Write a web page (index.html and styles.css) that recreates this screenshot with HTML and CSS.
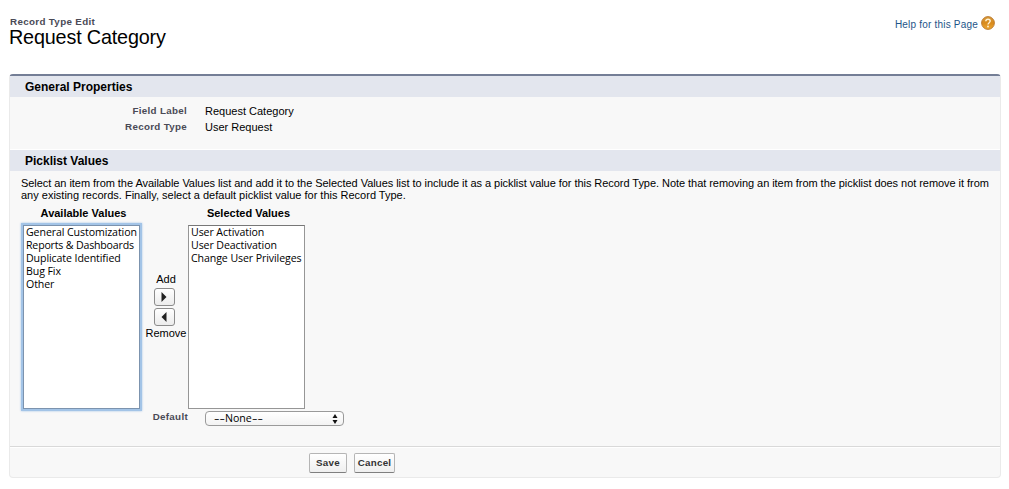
FILE: index.html
```html
<!DOCTYPE html>
<html lang="en">
<head>
<meta charset="utf-8">
<title>Record Type Edit: Request Category</title>
<link rel="stylesheet" href="styles.css">
</head>
<body>
<header class="page-head">
  <div class="titles">
    <div class="page-type">Record Type Edit</div>
    <h1>Request Category</h1>
  </div>
  <a class="help"><span>Help for this Page</span>
    <svg width="14" height="14" viewBox="0 0 14 14">
      <defs><linearGradient id="orb" x1="0" y1="0" x2="0" y2="1"><stop offset="0" stop-color="#d69a3c"/><stop offset=".5" stop-color="#d98a1c"/><stop offset="1" stop-color="#eda832"/></linearGradient></defs>
      <circle cx="7" cy="7" r="6.4" fill="url(#orb)" stroke="#b9762a" stroke-width=".9"/>
      <path d="M4.8 5.3C4.9 4 5.800 3.300 7 3.300C8.300 3.300 9.200 4 9.200 5.100C9.200 6.700 7 6.700 7 8.600" fill="none" stroke="#fff3d8" stroke-width="1.400"/>
      <circle cx="7" cy="10.500" r=".9" fill="#fff3d8"/>
    </svg>
  </a>
</header>
<main class="panel">
  <h2 class="section">General Properties</h2>
  <dl class="details">
    <dt class="label">Field Label</dt><dd>Request Category</dd>
    <dt class="label">Record Type</dt><dd>User Request</dd>
  </dl>
  <h2 class="section second">Picklist Values</h2>
  <div class="intro"><div class="lead">Select an item from the Available Values list and add it to the Selected Values list to include it as a picklist value for this Record Type. Note that removing an item from the picklist does not remove it from</div><div>any existing records. Finally, select a default picklist value for this Record Type.</div></div>
  <div class="picker">
    <div class="column">
      <h3>Available Values</h3>
      <ul class="list focused"><li>General Customization</li><li class="tight">Reports &amp; Dashboards</li><li>Duplicate Identified</li><li>Bug Fix</li><li>Other</li></ul>
    </div>
    <div class="transfer">
      <span class="word">Add</span>
      <button class="arrow" aria-label="Add"><svg width="6" height="10" viewBox="0 0 6 10"><path d="M.5 0L5.500 5 .5 10z" fill="#222"/></svg></button>
      <button class="arrow" aria-label="Remove"><svg width="6" height="10" viewBox="0 0 6 10"><path d="M5.500 0L.5 5l5 5z" fill="#222"/></svg></button>
      <span class="word remove">Remove</span>
    </div>
    <div class="column">
      <h3>Selected Values</h3>
      <ul class="list"><li>User Activation</li><li>User Deactivation</li><li>Change User Privileges</li></ul>
    </div>
  </div>
  <div class="default-row">
    <span class="label">Default</span>
    <div class="select"><span><span class="dash">--</span>None<span class="dash">--</span></span><svg width="6" height="10" viewBox="0 0 6 10"><path d="M3 0l2.500 4h-5zM3 10L.5 6h5z" fill="#111"/></svg></div>
  </div>
  <footer class="actions"><button class="btn save">Save</button><button class="btn cancel">Cancel</button></footer>
</main>
</body>
</html>
```
FILE: styles.css
```css
* { box-sizing: border-box; }
body { margin: 0; background: #fff; color: #000; font: 11px/13px "Liberation Sans", Arial, sans-serif; white-space: nowrap; }
h1, h2, h3, ul, dl, dd { margin: 0; padding: 0; }
button { margin: 0; padding: 0; font-family: inherit; }
svg { display: block; flex: none; }

.page-head { display: flex; justify-content: space-between; height: 74px; padding: 15px 14px 0 10px; }
.page-type { font-size: 9.8px; line-height: 13px; font-weight: bold; color: #4a4a56; letter-spacing: .33px; }
h1 { font-size: 19.8px; line-height: 19px; font-weight: normal; margin-left: -1px; letter-spacing: -.17px; }
.help { display: flex; gap: 3px; color: #1d5488; font-size: 10px; line-height: 20px; letter-spacing: .2px; }
.help svg { margin-top: 1px; }

.panel { width: 992px; height: 404px; margin-left: 9px; background: #f8f8f8; border: 1px solid #eaeaea; border-top: 2px solid #747e96; border-radius: 4px; }
.section { height: 21px; padding-left: 15px; background: #e3e6ee; font-size: 12px; line-height: 22px; }
.section.second { height: 22px; border-top: 1px solid #fff; }
.details { display: grid; grid-template-columns: 177px auto; column-gap: 18px; grid-auto-rows: 16px; height: 52px; padding-top: 6px; line-height: 16px; }
.label { font-size: 9.8px; font-weight: bold; color: #4a4a56; text-align: right; letter-spacing: .3px; }
.intro { padding: 6px 0 0 11px; line-height: 12px; height: 36px; }
.lead { letter-spacing: -.049px; }

.picker { display: flex; padding-left: 13px; }
.column { width: 117px; }
h3 { height: 18px; font-size: 11px; line-height: 13px; text-align: center; padding-left: 4px; }
.list { height: 184px; list-style: none; background: #fff; border: 1px solid #969696; border-top-color: #777; padding: 0 0 0 2px; font: 10.6px/13px "Lucida Grande", "Open Sans", sans-serif; letter-spacing: -.09px; }
.list .tight { letter-spacing: -.18px; }
.focused { border-color: #7c93ae; box-shadow: 0 0 0 2px #a3c4e7, 0 0 2px 2px #a3c4e7; }
.transfer { width: 48px; padding-top: 66px; display: flex; flex-direction: column; align-items: center; }
.word { line-height: 13px; margin-left: 4px; }
.arrow { display: flex; align-items: center; justify-content: center; width: 21px; height: 18px; margin-top: 2px; border: 1px solid #8c8c8c; border-radius: 3px; background: linear-gradient(#fff, #ececec); }
.remove { margin-top: 1px; }

.default-row { display: flex; gap: 17px; height: 37px; }
.default-row .label { width: 178px; line-height: 16px; }
.select { display: flex; align-items: center; justify-content: space-between; width: 139px; height: 15px; margin-top: 2px; padding: 0 5px 0 8px; border: 1px solid #9a9a9a; border-radius: 4px; background: linear-gradient(#fff, #f3f3f3); font: 10.6px/13px "Lucida Grande", "Open Sans", sans-serif; }
.dash { display: inline-block; width: 11px; transform: scaleX(1.6); transform-origin: left; }
.actions { display: flex; gap: 7px; height: 31px; padding: 6px 0 0 299px; border-top: 1px solid #d9d9d9; box-shadow: inset 0 1px #fff; }
.btn { height: 20px; border: 1px solid #b5b5b5; border-bottom-color: #7f7f7f; border-radius: 2px; background: linear-gradient(#fff, #efefef); color: #333; font-size: 9.8px; line-height: 16px; font-weight: bold; letter-spacing: .25px; }
.save { width: 38px; }
.cancel { width: 41px; }
```
